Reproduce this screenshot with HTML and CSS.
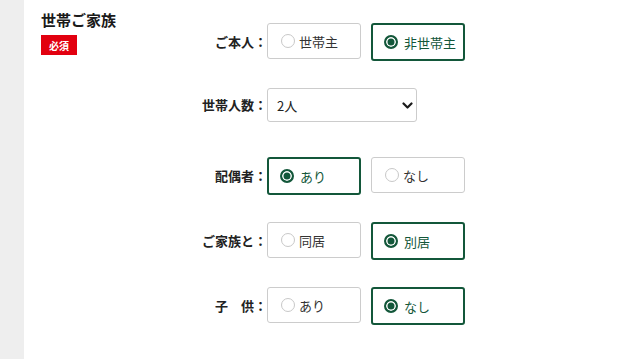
FILE: index.html
```html
<!DOCTYPE html>
<html lang="ja">
<head>
<meta charset="utf-8">
<link rel="stylesheet" href="styles.css">
</head>
<body>
<div class="page">
  <div class="strip"></div>
  <div class="section">
    <div class="head">
      <div class="title">世帯ご家族</div>
      <span class="badge">必須</span>
    </div>
    <div class="form">
      <div class="row">
        <div class="label">ご本人：</div>
        <div class="opts">
          <label class="opt"><span class="dot"></span><span>世帯主</span></label>
          <label class="opt on"><span class="dot"></span><span>非世帯主</span></label>
        </div>
      </div>
      <div class="row row-select">
        <div class="label">世帯人数：</div>
        <div class="select-wrap">
          <select class="select">
            <option>1人</option>
            <option selected>2人</option>
            <option>3人</option>
          </select>
          <svg class="chev" width="11" height="8" viewBox="0 0 11 8"><polyline points="1.5,1.5 5.5,5.5 9.5,1.5" fill="none" stroke="#1a1a1a" stroke-width="2.2" stroke-linecap="round" stroke-linejoin="round"/></svg>
        </div>
      </div>
      <div class="row">
        <div class="label">配偶者：</div>
        <div class="opts">
          <label class="opt on"><span class="dot"></span><span>あり</span></label>
          <label class="opt"><span class="dot"></span><span>なし</span></label>
        </div>
      </div>
      <div class="row">
        <div class="label">ご家族と：</div>
        <div class="opts">
          <label class="opt"><span class="dot"></span><span>同居</span></label>
          <label class="opt on"><span class="dot"></span><span>別居</span></label>
        </div>
      </div>
      <div class="row">
        <div class="label">子　供：</div>
        <div class="opts">
          <label class="opt"><span class="dot"></span><span>あり</span></label>
          <label class="opt on"><span class="dot"></span><span>なし</span></label>
        </div>
      </div>
    </div>
  </div>
</div>
</body>
</html>
```
FILE: styles.css
```css
html, body {
  margin: 0;
  padding: 0;
  background: #fff;
}
body {
  font-family: "Noto Sans CJK JP", "Noto Sans", sans-serif;
  color: #222;
}
.page {
  display: flex;
  width: 618px;
  height: 359px;
  overflow: hidden;
}
.strip {
  width: 24px;
  flex: none;
  background: #eeeeee;
}
.section {
  display: flex;
  padding-left: 17px;
}
.head {
  width: 126px;
  padding-top: 9px;
}
.title {
  font-size: 15px;
  font-weight: 700;
  line-height: 22px;
  color: #1a1a1a;
}
.badge {
  display: flex;
  align-items: center;
  justify-content: center;
  margin-top: 4px;
  width: 36px;
  height: 20px;
  background: #e2000f;
  color: #fff;
  font-size: 10px;
  font-weight: 700;
}
.form {
  padding-top: 23px;
  display: flex;
  flex-direction: column;
  gap: 27px;
}
.row {
  display: flex;
  align-items: flex-start;
}
.row-select {
  align-items: center;
  margin-bottom: 8px;
}
.label {
  width: 100px;
  text-align: right;
  font-size: 13px;
  font-weight: 700;
  line-height: 38px;
  color: #222;
  white-space: nowrap;
}
.row-select .label {
  line-height: 34px;
}
.opts {
  display: grid;
  grid-template-columns: 104px 104px;
  align-items: start;
}
.opt {
  box-sizing: content-box;
  width: 79px;
  height: 34px;
  padding-left: 13px;
  border: 1px solid #cccccc;
  border-radius: 3px;
  display: flex;
  align-items: center;
  gap: 4px;
  font-size: 13px;
  color: #333;
  background: #fff;
}
.opt.on {
  border: 2px solid #13573a;
  padding-left: 11px;
  color: #13573a;
  gap: 6px;
}
.dot {
  box-sizing: border-box;
  width: 14px;
  height: 14px;
  border-radius: 50%;
  border: 1px solid #c8c8c8;
  background: #fff;
  flex: none;
}
.opt.on .dot {
  border: 2px solid #13573a;
  background: #13573a;
  box-shadow: inset 0 0 0 1.5px #fff;
}
.select-wrap {
  position: relative;
  width: 150px;
  height: 34px;
}
.select {
  appearance: none;
  -webkit-appearance: none;
  box-sizing: border-box;
  width: 150px;
  height: 34px;
  border: 1px solid #cccccc;
  border-radius: 3px;
  background: #fff;
  padding: 0 0 0 9px;
  font-family: "Noto Sans CJK JP", "Noto Sans", sans-serif;
  font-size: 13px;
  color: #222;
  outline: none;
}
.chev {
  position: absolute;
  right: 4px;
  top: 14px;
  pointer-events: none;
}
```
